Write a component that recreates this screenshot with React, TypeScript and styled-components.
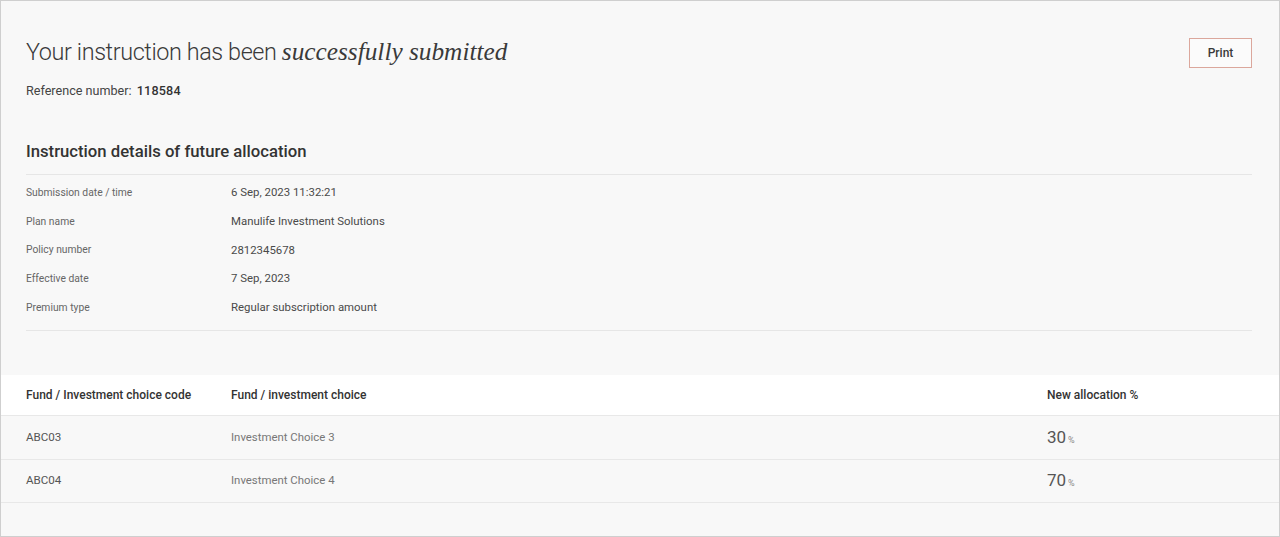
import React from "react";
import styled, { createGlobalStyle } from "styled-components";

const Global = createGlobalStyle`
  html, body { margin: 0; padding: 0; background: #f8f8f8; }
  * { box-sizing: border-box; }
  body { font-family: Roboto, "Liberation Sans", Arial, sans-serif; color: #333; }
`;

const Page = styled.div`
  width: 1280px;
  height: 537px;
  border: 1px solid #cfcfcf;
  background: #f8f8f8;
  overflow: hidden;
`;

const Top = styled.section`
  padding: 35px 27px 0 25px;
`;

const TitleRow = styled.div`
  display: flex;
  justify-content: space-between;
  align-items: flex-start;
`;

const Title = styled.h1`
  margin: 0;
  font-size: 23.4px;
  line-height: 30px;
  font-weight: 300;
  color: #3a3a3a;
  letter-spacing: -0.4px;
`;

const Em = styled.em`
  font-family: "Liberation Serif", "DejaVu Serif", serif;
  font-style: italic;
  font-weight: 400;
  font-size: 25.3px;
  color: #3a3a3a;
  letter-spacing: 0;
`;

const PrintButton = styled.button`
  margin-top: 2px;
  width: 63px;
  height: 30px;
  border: 1px solid #dba79c;
  background: #fbfbfb;
  color: #3a3a3a;
  font-family: inherit;
  font-size: 12px;
  font-weight: 500;
  padding: 0;
  cursor: pointer;
`;

const Reference = styled.p`
  margin: 15px 0 0;
  font-size: 12.6px;
  line-height: 16px;
  color: #444;
  strong { font-weight: 500; color: #333; margin-left: 2px; letter-spacing: 0.2px; }
`;

const SectionTitle = styled.h2`
  margin: 43px 0 0;
  padding-bottom: 12px;
  font-size: 16.7px;
  line-height: 20px;
  font-weight: 500;
  color: #333;
  border-bottom: 1px solid #e6e6e6;
`;

const Details = styled.div`
  padding: 3px 0 9px;
  border-bottom: 1px solid #e6e6e6;
`;

const DetailRow = styled.div`
  display: grid;
  grid-template-columns: 205px 1fr;
  align-items: center;
  height: 28.7px;
`;

const Label = styled.span`
  font-size: 10.3px;
  color: #666;
`;

const Value = styled.span`
  font-size: 11.4px;
  color: #4a4a4a;
`;

const Table = styled.div`
  margin-top: 44px;
`;

const Row = styled.div<{ $header?: boolean; $h: number }>`
  display: grid;
  grid-template-columns: 205px 816px 1fr;
  align-items: center;
  height: ${(p) => p.$h}px;
  padding-left: 25px;
  background: ${(p) => (p.$header ? "#ffffff" : "transparent")};
  border-bottom: 1px solid #e8e8e8;
`;

const Th = styled.span`
  font-size: 12px;
  font-weight: 500;
  color: #333;
`;

const Code = styled.span`
  font-size: 11.6px;
  color: #555;
  margin-top: -2px;
`;

const Choice = styled.span`
  font-size: 11.4px;
  color: #777;
  margin-top: -2px;
`;

const Alloc = styled.span`
  font-size: 17px;
  color: #555;
  margin-top: -2px;
  small { font-size: 9px; color: #888; margin-left: 2px; }
`;

const details: [string, string][] = [
  ["Submission date / time", "6 Sep, 2023 11:32:21"],
  ["Plan name", "Manulife Investment Solutions"],
  ["Policy number", "2812345678"],
  ["Effective date", "7 Sep, 2023"],
  ["Premium type", "Regular subscription amount"],
];

const funds = [
  { code: "ABC03", name: "Investment Choice 3", pct: 30, h: 44 },
  { code: "ABC04", name: "Investment Choice 4", pct: 70, h: 43 },
];

export default function App() {
  return (
    <>
      <Global />
      <Page>
        <Top>
          <TitleRow>
            <Title>
              Your instruction has been <Em>successfully submitted</Em>
            </Title>
            <PrintButton>Print</PrintButton>
          </TitleRow>
          <Reference>
            Reference number: <strong>118584</strong>
          </Reference>
          <SectionTitle>Instruction details of future allocation</SectionTitle>
          <Details>
            {details.map(([l, v]) => (
              <DetailRow key={l}>
                <Label>{l}</Label>
                <Value>{v}</Value>
              </DetailRow>
            ))}
          </Details>
        </Top>
        <Table>
          <Row $header $h={41}>
            <Th>Fund / Investment choice code</Th>
            <Th>Fund / investment choice</Th>
            <Th>New allocation %</Th>
          </Row>
          {funds.map((f) => (
            <Row key={f.code} $h={f.h}>
              <Code>{f.code}</Code>
              <Choice>{f.name}</Choice>
              <Alloc>
                {f.pct}
                <small>%</small>
              </Alloc>
            </Row>
          ))}
        </Table>
      </Page>
    </>
  );
}
